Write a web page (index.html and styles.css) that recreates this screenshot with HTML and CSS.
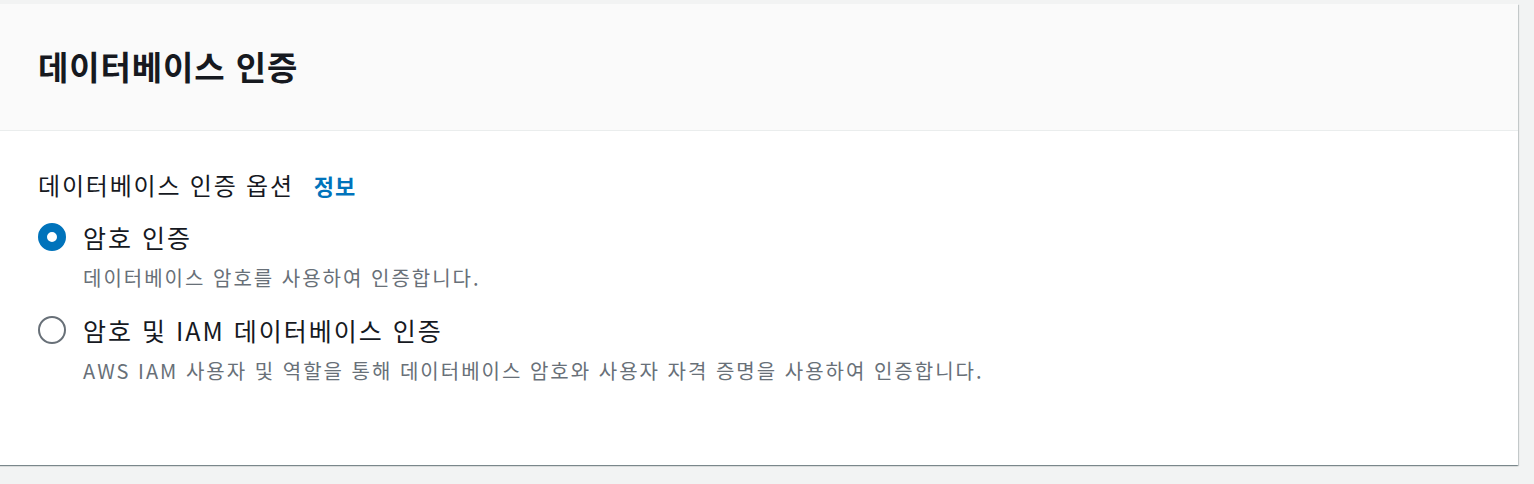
FILE: index.html
```html
<!DOCTYPE html>
<html lang="ko">
<head>
<meta charset="utf-8">
<link rel="stylesheet" href="styles.css">
</head>
<body>
<div class="card">
  <div class="card-header">
    <h2 class="title">데이터베이스 인증</h2>
  </div>
  <div class="card-body">
    <div class="field-label">
      <span>데이터베이스 인증 옵션</span>
      <a class="info" href="#">정보</a>
    </div>
    <div class="radio-group">
      <label class="radio-item">
        <span class="radio checked"></span>
        <span class="radio-text">
          <span class="radio-label">암호 인증</span>
          <span class="radio-desc">데이터베이스 암호를 사용하여 인증합니다.</span>
        </span>
      </label>
      <label class="radio-item">
        <span class="radio"></span>
        <span class="radio-text">
          <span class="radio-label">암호 및 IAM 데이터베이스 인증</span>
          <span class="radio-desc">AWS IAM 사용자 및 역할을 통해 데이터베이스 암호와 사용자 자격 증명을 사용하여 인증합니다.</span>
        </span>
      </label>
    </div>
  </div>
</div>
</body>
</html>
```

FILE: styles.css
```css
html, body {
  margin: 0;
  padding: 0;
}
body {
  background: #f2f3f3;
  font-family: "Noto Sans CJK KR", "Noto Sans", sans-serif;
  color: #16191f;
  padding-top: 4px;
  height: 480px;
  overflow: hidden;
}
.card {
  margin-left: -4px;
  width: 1522px;
  background: #ffffff;
  box-shadow: 0 1px 1px 0 rgba(0, 28, 36, 0.3), 1px 1px 1px 0 rgba(0, 28, 36, 0.15), -1px 1px 1px 0 rgba(0, 28, 36, 0.15);
}
.card-header {
  background: #fafafa;
  border-bottom: 1px solid #eaeded;
  height: 126px;
  display: flex;
  align-items: center;
  padding-left: 42px;
}
.title {
  margin: 0;
  font-size: 33px;
  font-weight: 700;
  line-height: 40px;
  letter-spacing: 0.9px;
  padding-bottom: 2px;
}
.card-body {
  padding: 39px 0 0 42px;
  height: 334px;
  box-sizing: border-box;
}
.field-label {
  font-size: 24px;
  line-height: 30px;
  letter-spacing: 1.8px;
  display: flex;
  align-items: center;
  gap: 20px;
}
.info {
  color: #0073bb;
  font-weight: 700;
  font-size: 22px;
  letter-spacing: 1px;
  text-decoration: none;
}
.radio-group {
  display: flex;
  flex-direction: column;
  gap: 22px;
  margin-top: 21px;
}
.radio-item {
  display: flex;
  gap: 17px;
}
.radio {
  flex: none;
  width: 28px;
  height: 28px;
  box-sizing: border-box;
  border-radius: 50%;
  border: 2.5px solid #687078;
  margin-top: 2px;
  background: #fff;
}
.radio.checked {
  border: 9px solid #0073bb;
}
.radio-text {
  display: flex;
  flex-direction: column;
}
.radio-label {
  font-size: 25px;
  line-height: 32px;
  letter-spacing: 2px;
}
.radio-desc {
  font-size: 20px;
  line-height: 28px;
  letter-spacing: 2px;
  color: #687078;
  margin-top: 11px;
}
```
